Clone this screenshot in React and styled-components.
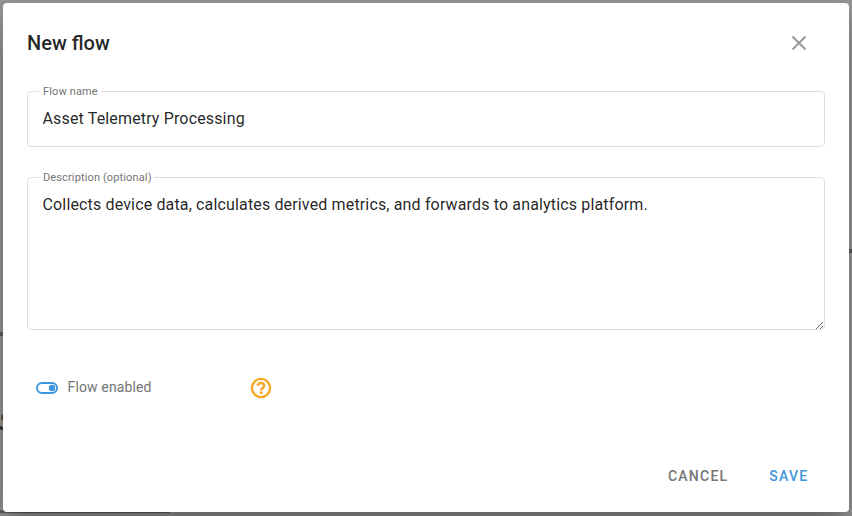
import React from "react";
import styled, { createGlobalStyle } from "styled-components";

const GlobalStyle = createGlobalStyle`
  * { box-sizing: border-box; }
  body {
    margin: 0;
    overflow: hidden;
    font-family: Roboto, sans-serif;
    -webkit-font-smoothing: antialiased;
  }
`;

const Backdrop = styled.div`
  position: relative;
  width: 852px;
  height: 516px;
  padding: 3px 3px 4px;
  overflow: hidden;
  background: #999;
`;

const PageRule = styled.div`
  position: absolute;
  left: ${(p) => p.$x}px;
  top: ${(p) => p.$y}px;
  width: ${(p) => p.$w}px;
  height: ${(p) => p.$h}px;
  background: ${(p) => p.$color || "#606060"};
`;

const PageMark = styled.svg`
  position: absolute;
  left: 0;
  top: 413px;
`;

const Dialog = styled.section`
  position: relative;
  display: flex;
  flex-direction: column;
  height: 509px;
  padding: 0 24px;
  border-radius: 4px;
  background: #fff;
  box-shadow:
    0 11px 15px -7px rgba(0, 0, 0, 0.2),
    0 24px 38px 3px rgba(0, 0, 0, 0.14),
    0 9px 46px 8px rgba(0, 0, 0, 0.12);
`;

const Header = styled.header`
  display: flex;
  align-items: center;
  justify-content: space-between;
  height: 80px;
`;

const Title = styled.h2`
  margin: 0;
  color: rgba(0, 0, 0, 0.87);
  font-size: 20px;
  font-weight: 500;
  line-height: 32px;
`;

const CloseButton = styled.button`
  display: grid;
  place-items: center;
  width: 24px;
  height: 24px;
  margin-right: 14.5px;
  padding: 0;
  border: 0;
  background: none;
  color: #999;
`;

const Field = styled.label`
  position: relative;
  display: flex;
  height: ${(p) => p.$height}px;
  margin-top: ${(p) => p.$gap}px;
  border: 1px solid #dedede;
  border-radius: 4px;
`;

const FieldLabel = styled.span`
  position: absolute;
  left: 11px;
  top: -8px;
  width: ${(p) => p.$width}px;
  padding-left: 4px;
  background: #fff;
  color: #757575;
  font-size: 11px;
  line-height: 16px;
  letter-spacing: 0.13px;
  white-space: nowrap;
`;

const controlStyle = `
  width: 100%;
  border: 0;
  outline: 0;
  background: transparent;
  color: rgba(0, 0, 0, 0.87);
  font-family: Roboto, sans-serif;
  font-size: 16px;
  line-height: 24px;
  letter-spacing: 0.15px;
`;

const TextInput = styled.input`
  ${controlStyle}
  padding: 0 14.5px;
`;

const TextArea = styled.textarea`
  ${controlStyle}
  height: 152px;
  padding: 15px 14.5px 14px;
  resize: vertical;
`;

const OptionRow = styled.div`
  display: flex;
  align-items: center;
  height: 24px;
  margin: 46px 0 0 9px;
`;

const OptionLabel = styled.span`
  width: 181.5px;
  margin: -2px 0 0 9.5px;
  color: #757575;
  font-size: 14px;
  line-height: 20px;
  letter-spacing: 0.14px;
`;

const Actions = styled.footer`
  display: flex;
  justify-content: flex-end;
  gap: 40.5px;
  margin: 66px 16px 0 0;
`;

const ActionButton = styled.button`
  padding: 0;
  border: 0;
  background: none;
  color: ${(p) => (p.$primary ? "#4096dc" : "#757575")};
  font-family: Roboto, sans-serif;
  font-size: 14px;
  font-weight: 500;
  line-height: 20px;
  letter-spacing: 1.25px;
  margin-right: 0.5px;
`;

const CloseIcon = () => (
  <svg width="24" height="24" viewBox="0 0 24 24" fill="none" stroke="currentColor" strokeWidth="2">
    <path d="M5.5 5.5 18.5 18.5M18.5 5.5 5.5 18.5" />
  </svg>
);

const ToggleIcon = () => (
  <svg width="22" height="12" viewBox="0 0 22 12">
    <rect x="1" y="1" width="20" height="10" rx="5" fill="none" stroke="#4096dc" strokeWidth="2" />
    <circle cx="16" cy="6" r="3.2" fill="#4096dc" />
  </svg>
);

const HelpIcon = () => (
  <svg width="24" height="24" viewBox="0 0 24 24" fill="none" stroke="#f9a825">
    <circle cx="12" cy="12" r="9.1" strokeWidth="2.4" />
    <path d="M8.8 9.8C9 8.1 10.2 7.1 12 7.1c1.9 0 3.1 1.1 3.1 2.6 0 2.3-2.9 2.4-2.9 4.7" strokeWidth="2.5" />
    <circle cx="12.1" cy="16.8" r="1.5" fill="#f9a825" stroke="none" />
  </svg>
);

export default function App() {
  return (
    <>
      <GlobalStyle />
      <Backdrop>
        <PageRule $x={0} $y={332} $w={3} $h={4} />
        <PageRule $x={849} $y={249} $w={3} $h={4} />
        <PageRule $x={0} $y={510} $w={170} $h={3} />
        <PageMark width="3" height="18" viewBox="0 0 3 18" fill="none" aria-hidden="true">
          <path d="M3 1.5Q1.2 4.5 3 7.5" stroke="#5f482f" strokeWidth="2" />
          <path d="M0 13.5Q1 15.5 3 16" stroke="#34373f" strokeWidth="3" />
        </PageMark>
        <Dialog role="dialog" aria-label="New flow">
          <Header>
            <Title>New flow</Title>
            <CloseButton aria-label="Close"><CloseIcon /></CloseButton>
          </Header>
          <Field $height={56} $gap={8}>
            <FieldLabel $width={62}>Flow name</FieldLabel>
            <TextInput defaultValue="Asset Telemetry Processing" />
          </Field>
          <Field $height={153} $gap={30}>
            <FieldLabel $width={115}>Description (optional)</FieldLabel>
            <TextArea
              spellCheck={false}
              defaultValue="Collects device data, calculates derived metrics, and forwards to analytics platform."
            />
          </Field>
          <OptionRow>
            <ToggleIcon />
            <OptionLabel>Flow enabled</OptionLabel>
            <HelpIcon />
          </OptionRow>
          <Actions>
            <ActionButton>CANCEL</ActionButton>
            <ActionButton $primary>SAVE</ActionButton>
          </Actions>
        </Dialog>
      </Backdrop>
    </>
  );
}
